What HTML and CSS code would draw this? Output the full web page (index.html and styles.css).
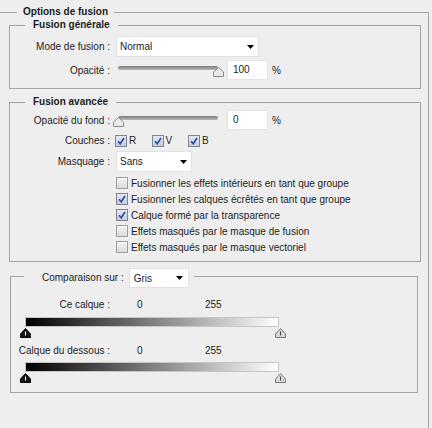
FILE: index.html
```html
<!DOCTYPE html>
<html lang="fr">
<head>
<meta charset="utf-8">
<title>Options de fusion</title>
<link rel="stylesheet" href="styles.css">
</head>
<body>
<fieldset class="panel">
  <legend class="panel-title">Options de fusion</legend>

  <fieldset class="group general">
    <legend class="group-title">Fusion générale</legend>
    <div class="form">
      <span class="label">Mode de fusion :</span>
      <div class="select select-mode">
        <span>Normal</span>
        <svg class="arrow" width="7" height="4" viewBox="0 0 7 4"><path d="M0 0H7L3.5 4Z" fill="#000"/></svg>
      </div>
      <span class="label">Opacité :</span>
      <div class="slider-row">
        <div class="slider">
          <div class="track"></div>
          <svg class="thumb" style="left:100%" width="11" height="10" viewBox="0 0 11 10"><path d="M5.5 0.5L10.5 5V9.5H0.5V5Z" fill="#e9e9e9" stroke="#8a8a8a"/></svg>
        </div>
        <div class="field">100</div>
        <span class="unit">%</span>
      </div>
    </div>
  </fieldset>

  <fieldset class="group advanced">
    <legend class="group-title">Fusion avancée</legend>
    <div class="form">
      <span class="label">Opacité du fond :</span>
      <div class="slider-row">
        <div class="slider">
          <div class="track"></div>
          <svg class="thumb" style="left:0%" width="11" height="10" viewBox="0 0 11 10"><path d="M5.5 0.5L10.5 5V9.5H0.5V5Z" fill="#e9e9e9" stroke="#8a8a8a"/></svg>
        </div>
        <div class="field">0</div>
        <span class="unit">%</span>
      </div>

      <span class="label">Couches :</span>
      <div class="couches">
        <label class="cb-inline"><span class="cb on"><svg width="8" height="8" viewBox="0 0 8 8"><path d="M1 4.2L3.2 6.8L7 1" fill="none" stroke="#2b4c96" stroke-width="1.6"/></svg></span>R</label>
        <label class="cb-inline"><span class="cb on"><svg width="8" height="8" viewBox="0 0 8 8"><path d="M1 4.2L3.2 6.8L7 1" fill="none" stroke="#2b4c96" stroke-width="1.6"/></svg></span>V</label>
        <label class="cb-inline"><span class="cb on"><svg width="8" height="8" viewBox="0 0 8 8"><path d="M1 4.2L3.2 6.8L7 1" fill="none" stroke="#2b4c96" stroke-width="1.6"/></svg></span>B</label>
      </div>

      <span class="label">Masquage :</span>
      <div class="select select-mask">
        <span>Sans</span>
        <svg class="arrow" width="7" height="4" viewBox="0 0 7 4"><path d="M0 0H7L3.5 4Z" fill="#000"/></svg>
      </div>

      <div class="checklist">
        <label class="check-row"><span class="cb"></span>Fusionner les effets intérieurs en tant que groupe</label>
        <label class="check-row"><span class="cb on"><svg width="8" height="8" viewBox="0 0 8 8"><path d="M1 4.2L3.2 6.8L7 1" fill="none" stroke="#2b4c96" stroke-width="1.6"/></svg></span>Fusionner les calques écrêtés en tant que groupe</label>
        <label class="check-row"><span class="cb on"><svg width="8" height="8" viewBox="0 0 8 8"><path d="M1 4.2L3.2 6.8L7 1" fill="none" stroke="#2b4c96" stroke-width="1.6"/></svg></span>Calque formé par la transparence</label>
        <label class="check-row"><span class="cb"></span>Effets masqués par le masque de fusion</label>
        <label class="check-row"><span class="cb"></span>Effets masqués par le masque vectoriel</label>
      </div>
    </div>
  </fieldset>

  <fieldset class="group compare">
    <legend class="compare-title">
      <span class="compare-label">Comparaison sur :</span>
      <span class="select select-gray">
        <span>Gris</span>
        <svg class="arrow" width="7" height="4" viewBox="0 0 7 4"><path d="M0 0H7L3.5 4Z" fill="#000"/></svg>
      </span>
    </legend>
    <div class="levels">
      <div class="level-head">
        <span class="level-label">Ce calque :</span>
        <span class="level-min">0</span>
        <span class="level-max">255</span>
      </div>
      <div class="ramp"></div>
      <div class="ramp-thumbs">
        <svg width="11" height="10" viewBox="0 0 11 10"><path d="M5.5 0.5L10.5 6V9.5H0.5V6Z" fill="#151515" stroke="#000"/><path d="M5.5 3.5V7.5" stroke="#fff"/></svg>
        <svg width="11" height="10" viewBox="0 0 11 10"><path d="M5.5 0.5L10.5 6V9.5H0.5V6Z" fill="#d6d6d6" stroke="#7a7a7a"/><path d="M5.5 3.5V7.5" stroke="#444"/></svg>
      </div>

      <div class="level-head second">
        <span class="level-label">Calque du dessous :</span>
        <span class="level-min">0</span>
        <span class="level-max">255</span>
      </div>
      <div class="ramp second"></div>
      <div class="ramp-thumbs">
        <svg width="11" height="10" viewBox="0 0 11 10"><path d="M5.5 0.5L10.5 6V9.5H0.5V6Z" fill="#151515" stroke="#000"/><path d="M5.5 3.5V7.5" stroke="#fff"/></svg>
        <svg width="11" height="10" viewBox="0 0 11 10"><path d="M5.5 0.5L10.5 6V9.5H0.5V6Z" fill="#d6d6d6" stroke="#7a7a7a"/><path d="M5.5 3.5V7.5" stroke="#444"/></svg>
      </div>
    </div>
  </fieldset>
</fieldset>
</body>
</html>
```

FILE: styles.css
```css
* { box-sizing: border-box; }

html, body {
  margin: 0;
  padding: 0;
}

body {
  width: 432px;
  height: 428px;
  overflow: hidden;
  background: #eeeeee;
  font-family: "Liberation Sans", Arial, sans-serif;
  font-size: 10px;
  color: #1c1c1c;
}

fieldset {
  margin: 0;
  padding: 0;
  border: 1px solid #a3a3a3;
  min-width: 0;
}

legend {
  padding: 0;
}

.panel {
  margin: 6px 0 0 -2px;
  width: 431px;
  height: 440px;
  border-bottom: none;
}

.panel-title {
  margin-left: 18px;
  padding: 0 6px;
  font-weight: bold;
  line-height: 12px;
}

.group {
  width: 412px;
  margin-left: 10px;
}

.group-title {
  margin-left: 15px;
  padding: 0 8px;
  font-weight: bold;
  line-height: 14px;
}

.form {
  display: grid;
  grid-template-columns: 100px 1fr;
  column-gap: 6px;
  align-items: center;
}

.label {
  text-align: right;
  white-space: nowrap;
}

.general .form {
  padding: 4px 0 8px;
  row-gap: 3px;
  grid-template-rows: 21px 20px;
}

.advanced {
  margin-top: 6px;
}

.advanced .form {
  padding: 1px 0 6px;
  row-gap: 4px;
}

/* dropdowns */
.select {
  display: flex;
  align-items: center;
  justify-content: space-between;
  height: 21px;
  background: #ffffff;
  border: 1px solid #e2e2e2;
  padding: 0 4px 0 3px;
}

.select-mode { width: 143px; }
.select-mask { width: 76px; }

.arrow { flex: none; }

/* sliders */
.slider-row {
  display: flex;
  align-items: center;
  height: 20px;
}

.slider {
  position: relative;
  width: 100px;
  height: 20px;
  margin-left: 2px;
}

.track {
  margin-top: 6px;
  height: 4px;
  border-radius: 2px;
  background: linear-gradient(#7b7b7b, #b9b9b9);
}

.thumb {
  position: absolute;
  top: 7px;
  margin-left: -5px;
}

.field {
  width: 41px;
  height: 20px;
  margin-left: 9px;
  padding-left: 5px;
  line-height: 18px;
  background: #ffffff;
  border: 1px solid #e4e4e4;
}

.unit { margin-left: 4px; }

/* checkboxes */
.cb {
  flex: none;
  display: flex;
  align-items: center;
  justify-content: center;
  width: 12px;
  height: 12px;
  border: 1px solid #a0a0a0;
  background: linear-gradient(#f6f6f6, #dadada);
}

.cb.on {
  border-color: #7e8590;
  background: linear-gradient(#e4e8f1, #c3cce0);
}

.couches {
  display: flex;
  align-items: center;
  height: 13px;
  margin-left: -1px;
}

.cb-inline {
  display: flex;
  align-items: center;
  gap: 2px;
  width: 36.5px;
}

.checklist {
  grid-column: 2;
  display: flex;
  flex-direction: column;
  margin-top: -1px;
}

.check-row {
  display: flex;
  align-items: center;
  gap: 3px;
  height: 16px;
  white-space: nowrap;
}

/* comparison */
.compare {
  width: 408px;
  margin: 6px 0 0 11px;
}

.compare-title {
  display: flex;
  align-items: flex-start;
  height: 16px;
  margin-left: 13px;
  padding: 0 5px 0 18px;
}

.compare-label {
  line-height: 20px;
  white-space: nowrap;
}

.select-gray {
  width: 60px;
  height: 20px;
  margin-left: 5px;
  padding: 0 5px 0 4px;
}

.levels {
  padding: 14px 0 9px;
}

.level-head {
  display: flex;
  line-height: 14px;
}

.level-head.second { margin-top: 6px; }

.level-label {
  width: 99px;
  text-align: right;
  white-space: nowrap;
}

.level-min {
  width: 68px;
  margin-left: 27px;
}

.ramp {
  width: 254px;
  height: 10px;
  margin: 5px 0 0 14px;
  border: 1px solid #c6c6c6;
  background: linear-gradient(to right, #000000, #ffffff);
}

.ramp.second { margin-top: 4px; }

.ramp-thumbs {
  display: flex;
  justify-content: space-between;
  width: 266px;
  height: 10px;
  margin: 1px 0 0 9px;
}
```
